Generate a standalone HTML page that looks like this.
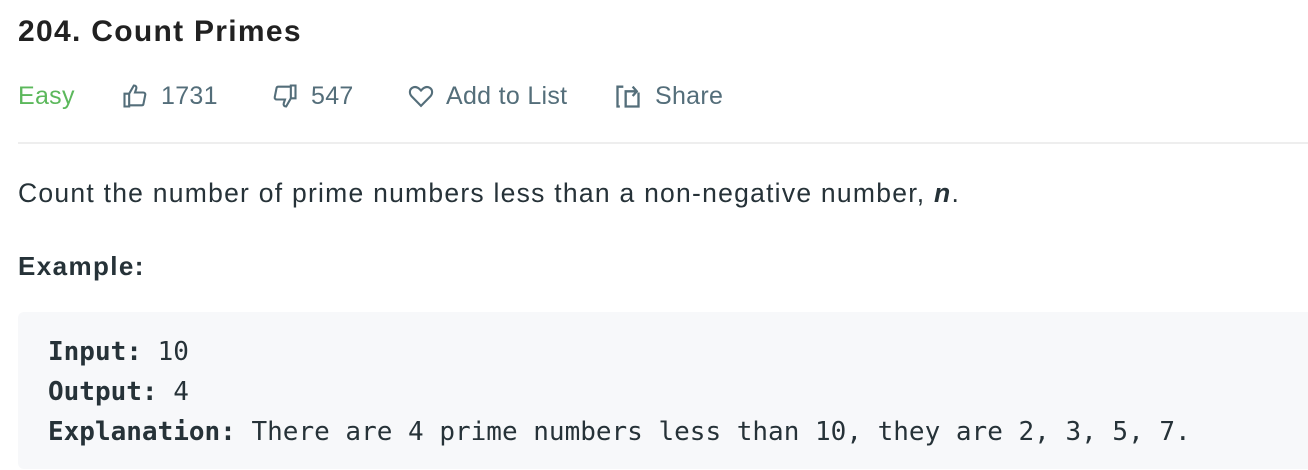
<!DOCTYPE html>
<html><head><style>
body{margin:0;width:1308px;height:470px;background:#fff;font-family:"Liberation Sans",Helvetica,sans-serif;color:#263238;overflow:hidden;position:relative}
.a{position:absolute;white-space:nowrap}
.t{left:18px;top:15px;font-size:30px;font-weight:bold;color:#212121;letter-spacing:1.3px}
.row{top:80px;font-size:25px;color:#546e7a;display:flex;align-items:center;height:32px;letter-spacing:0.3px}
.row span{display:inline-flex;align-items:center}
.hr{left:18px;right:0;top:142px;height:2px;background:#eee}
.p{left:18px;top:178px;font-size:26.5px;color:#263238;letter-spacing:1.25px}
.ex{left:18px;top:251px;font-size:26px;font-weight:bold;color:#263238;letter-spacing:1.4px}
pre{position:absolute;left:18px;top:312px;width:1300px;height:157px;margin:0;background:#f7f8fa;border-radius:6px;box-sizing:border-box;padding:20px 30px;font-family:"DejaVu Sans Mono",monospace;font-size:26px;line-height:40px;color:#263238}
</style></head><body>
<div class="a t">204. Count Primes</div>
<div class="a row" style="left:18px;color:#5cb85c">Easy</div>
<div class="a row" style="left:120px"><svg width="30" height="28" viewBox="0 0 24 24" fill="none" stroke="#546e7a" stroke-width="1.8"><path d="M3 10h4v11H3zM7 10l4-7c2 0 2.5 1.5 2 3l-1 3h7c1.2 0 2 1 1.8 2l-1.6 8c-.2.7-.8 1-1.5 1H7"/></svg><span style="margin-left:11px">1731</span></div>
<div class="a row" style="left:270px"><svg width="30" height="28" viewBox="0 0 24 24" fill="none" stroke="#546e7a" stroke-width="1.8"><path d="M21 14h-4V3h4zM17 14l-4 7c-2 0-2.5-1.5-2-3l1-3H5c-1.2 0-2-1-1.8-2l1.6-8C5 4.3 5.6 4 6.3 4H17"/></svg><span style="margin-left:11px">547</span></div>
<div class="a row" style="left:407px"><svg width="28" height="28" viewBox="0 0 24 24" fill="none" stroke="#546e7a" stroke-width="1.8"><path d="M12 20.5l-8-8.2C1.8 10 2 6.5 4.5 5c2.3-1.4 5-.6 7.5 2.3 2.5-2.9 5.2-3.7 7.5-2.3 2.5 1.5 2.7 5 .5 7.3z"/></svg><span style="margin-left:11px">Add to List</span></div>
<div class="a row" style="left:614px"><svg width="28" height="28" viewBox="0 0 24 24" fill="none" stroke="#546e7a" stroke-width="2"><path d="M8 4H3v17h2"/><path d="M9 21h12V9"/><path d="M10 21V8h9"/><path d="M16 4l3.5 4-3.5 4"/></svg><span style="margin-left:13px">Share</span></div>
<div class="a hr"></div>
<div class="a p">Count the number of prime numbers less than a non-negative number, <b><i>n</i></b>.</div>
<div class="a ex">Example:</div>
<pre><b>Input:</b> 10
<b>Output:</b> 4
<b>Explanation:</b> There are 4 prime numbers less than 10, they are 2, 3, 5, 7.</pre>
</body></html>
